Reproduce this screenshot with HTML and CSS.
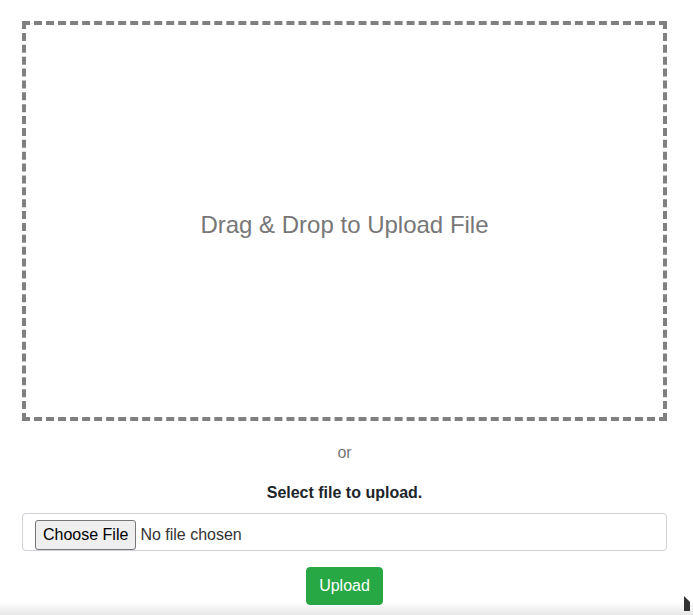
FILE: index.html
```html
<!DOCTYPE html>
<html lang="en">
<head>
<meta charset="utf-8">
<title>Upload</title>
<link rel="stylesheet" href="styles.css">
</head>
<body>
<div class="page">
  <div class="dropzone"><span>Drag &amp; Drop to Upload File</span></div>
  <p class="or">or</p>
  <form class="upload-form">
    <label class="label" for="file">Select file to upload.</label>
    <input class="file-input" type="file" id="file" name="file">
    <div class="actions">
      <button type="button" class="btn-upload">Upload</button>
    </div>
  </form>
</div>
<div class="bottom-fade"></div>
<svg class="cursor" width="6" height="16" viewBox="0 0 6 16"><path d="M0 0 L0 15 L6 15 L6 6 Z" fill="#333"/></svg>
</body>
</html>
```
FILE: styles.css
```css
html, body {
  margin: 0;
  padding: 0;
  background: #fff;
}
body {
  font-family: "Liberation Sans", Arial, sans-serif;
  font-size: 16px;
  line-height: 1.5;
  color: #212529;
}
.page {
  padding: 21px 26px 0 22px;
}
.dropzone {
  box-sizing: border-box;
  height: 400px;
  border: 4px dashed #808080;
  display: flex;
  align-items: center;
  justify-content: center;
  padding-top: 8px;
  font-size: 24px;
  color: #777;
}
.or {
  margin: 20px 0 0;
  text-align: center;
  color: #777;
  line-height: 24px;
}
.upload-form {
  display: flex;
  flex-direction: column;
}
.label {
  margin: 16px 0 8px;
  text-align: center;
  font-weight: bold;
  line-height: 24px;
}
.file-input {
  box-sizing: border-box;
  display: block;
  width: 100%;
  height: 38px;
  margin: 0;
  padding: 6px 12px;
  border: 1px solid #ced4da;
  border-radius: 4px;
  font-family: "Liberation Sans", Arial, sans-serif;
  font-size: 16px;
  line-height: 30px;
  color: #333;
  background: #fff;
  overflow: visible;
}
.file-input::file-selector-button {
  box-sizing: border-box;
  height: 30px;
  padding: 0 7px;
  margin: 0 4px 0 0;
  font-family: "Liberation Sans", Arial, sans-serif;
  font-size: 16px;
  color: #000;
  background: #efefef;
  border: 1px solid #767676;
  border-radius: 3px;
}
.actions {
  margin-top: 16px;
  text-align: center;
}
.btn-upload {
  font-family: "Liberation Sans", Arial, sans-serif;
  font-size: 16px;
  line-height: 24px;
  padding: 6px 12px;
  color: #fff;
  background: #28a745;
  border: 1px solid #28a745;
  border-radius: 4px;
}
.bottom-fade {
  position: fixed;
  left: 0;
  right: 0;
  bottom: 0;
  height: 13px;
  background: linear-gradient(to bottom, rgba(0,0,0,0), rgba(0,0,0,0.09));
  pointer-events: none;
}
.cursor {
  position: fixed;
  left: 684px;
  top: 596px;
}
```
